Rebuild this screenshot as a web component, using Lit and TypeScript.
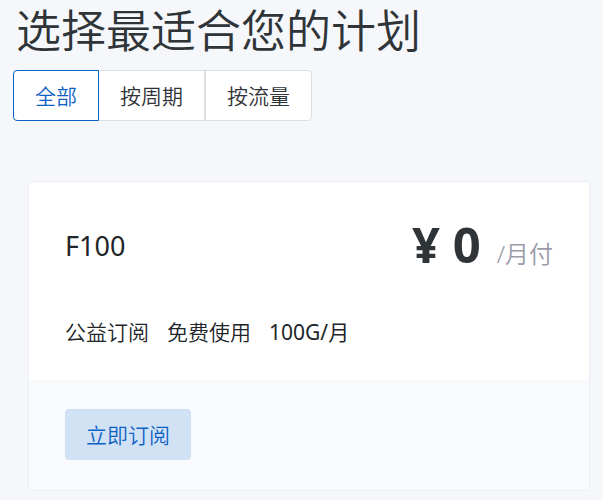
import { LitElement, html, css } from "lit";
import { customElement, state } from "lit/decorators.js";
import { classMap } from "lit/directives/class-map.js";

const FILTERS = ["全部", "按周期", "按流量"];

@customElement("app-root")
export class AppRoot extends LitElement {
  @state() private active = 0;

  static styles = css`
    :host {
      display: block;
      box-sizing: border-box;
      min-height: 100vh;
      padding: 0 13px 9px;
      background: #f5f7fb;
      color: #2f3438;
      font-family: "Noto Sans", "Noto Sans CJK SC", sans-serif;
      font-size: 21px;
      line-height: 31px;
    }
    h1,
    h2,
    p {
      margin: 0;
      font-weight: 400;
    }
    h1 {
      padding: 0 3px;
      font-size: 45px;
      line-height: 62px;
      font-weight: 350;
    }
    button {
      box-sizing: border-box;
      height: 51px;
      padding: 2px 20px 0;
      border: 1px solid #dcdfe3;
      font: inherit;
      font-weight: 350;
      color: inherit;
      white-space: nowrap;
      cursor: pointer;
    }
    .filters {
      display: flex;
      margin-top: 8px;
    }
    .filter {
      padding: 2px 21px 0;
      background: #fff;
    }
    .filter:first-child {
      border-radius: 4px 0 0 4px;
    }
    .filter:last-child {
      border-radius: 0 4px 4px 0;
    }
    .filter.active {
      border-color: #0e62c4;
      color: #0e62c4;
    }
    .filter.active + .filter {
      border-left: 0;
    }
    .card {
      margin: 60px 0 0 15px;
      border: 1px solid #eceff4;
      border-radius: 4px;
      background: #fff;
      color: #212529;
      overflow: hidden;
    }
    .head {
      display: flex;
      justify-content: space-between;
      align-items: center;
      padding: 31px 36px 0;
      height: 72px;
    }
    .name {
      padding-bottom: 8px;
      font-size: 27px;
    }
    .price {
      display: flex;
      align-items: baseline;
      gap: 16px;
      color: #2f3438;
      line-height: 72px;
    }
    .amount {
      font-size: 49px;
      font-weight: 700;
    }
    .period {
      font-size: 24px;
      font-weight: 350;
      color: #9a9ba8;
    }
    .features {
      display: flex;
      flex-wrap: wrap;
      gap: 18px;
      padding: 32px 36px 32px;
      font-weight: 350;
    }
    .quota {
      font-weight: 400;
    }
    .foot {
      padding: 29px 36px 30px;
      background: #f9fafc;
    }
    .subscribe {
      display: block;
      border-color: #cddff2;
      border-radius: 4px;
      background: #d2e2f5;
      color: #0e62c4;
    }
  `;

  render() {
    return html`
      <h1>选择最适合您的计划</h1>
      <div class="filters" role="group">
        ${FILTERS.map(
          (label, i) => html`<button
            type="button"
            class=${classMap({ filter: true, active: i === this.active })}
            @click=${() => (this.active = i)}
          >${label}</button>`
        )}
      </div>
      <section class="card">
        <div class="head">
          <h2 class="name">F100</h2>
          <div class="price">
            <span class="amount">¥ 0</span>
            <span class="period">/月付</span>
          </div>
        </div>
        <p class="features">
          <span>公益订阅</span><span>免费使用</span><span class="quota">100G/月</span>
        </p>
        <div class="foot">
          <button type="button" class="subscribe">立即订阅</button>
        </div>
      </section>
    `;
  }
}
